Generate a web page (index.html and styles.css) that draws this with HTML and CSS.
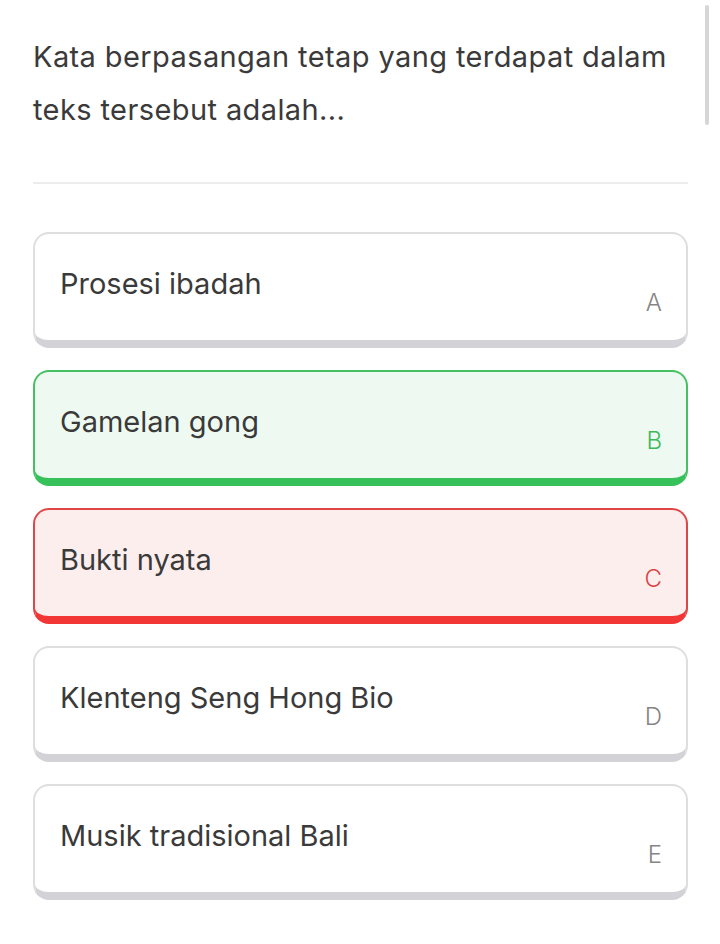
FILE: index.html
```html
<!DOCTYPE html>
<html>
<head>
    <title>Soal Pilihan Ganda</title>
    <link rel="stylesheet" href="styles.css">
</head>
<body>
    <div class="scrollbar"></div>
    <div class="quiz">
        <p class="question">Kata berpasangan tetap yang terdapat dalam teks tersebut adalah...</p>
        <hr class="divider">
        <div class="options">
            <div class="option">
                <span class="option-text">Prosesi ibadah</span>
                <span class="option-key">A</span>
            </div>
            <div class="option correct">
                <span class="option-text">Gamelan gong</span>
                <span class="option-key">B</span>
            </div>
            <div class="option wrong">
                <span class="option-text">Bukti nyata</span>
                <span class="option-key">C</span>
            </div>
            <div class="option">
                <span class="option-text">Klenteng Seng Hong Bio</span>
                <span class="option-key">D</span>
            </div>
            <div class="option">
                <span class="option-text">Musik tradisional Bali</span>
                <span class="option-key">E</span>
            </div>
        </div>
    </div>
</body>
</html>
```

FILE: styles.css
```css
body {
    margin: 0;
    background-color: #fff;
    font-family: Inter, "Noto Sans", sans-serif;
    color: #3a3a3a;
}

.scrollbar {
    position: fixed;
    top: 5px;
    right: 11px;
    width: 4px;
    height: 120px;
    border-radius: 2px;
    background-color: #d6d6d6;
}

.quiz {
    padding: 30px 32px 0 33px;
}

.question {
    margin: 0;
    font-size: 29px;
    line-height: 53px;
    letter-spacing: 0.4px;
}

.divider {
    margin: 46px 0 0 0;
    border: none;
    height: 2px;
    background-color: #ececec;
}

.options {
    display: flex;
    flex-direction: column;
    gap: 22px;
    margin-top: 48px;
}

.option {
    display: flex;
    justify-content: space-between;
    height: 116px;
    box-sizing: border-box;
    padding: 0 24px 0 25px;
    background-color: #fff;
    border: 2px solid #dedede;
    border-bottom: 8px solid #d2d2d7;
    border-radius: 16px;
}

.option-text {
    align-self: flex-start;
    padding-top: 32px;
    font-size: 29px;
    line-height: 35px;
}

.option-key {
    align-self: flex-end;
    padding-bottom: 25px;
    font-size: 24px;
    font-weight: 300;
    line-height: 24px;
    color: #858585;
}

.correct {
    background-color: #eefaf1;
    border-color: #45c063;
    border-bottom-color: #36c15a;
}

.correct .option-key {
    color: #3db95b;
}

.wrong {
    background-color: #fdeeee;
    border-color: #e04646;
    border-bottom-color: #f23535;
}

.wrong .option-key {
    color: #d84444;
}
```
